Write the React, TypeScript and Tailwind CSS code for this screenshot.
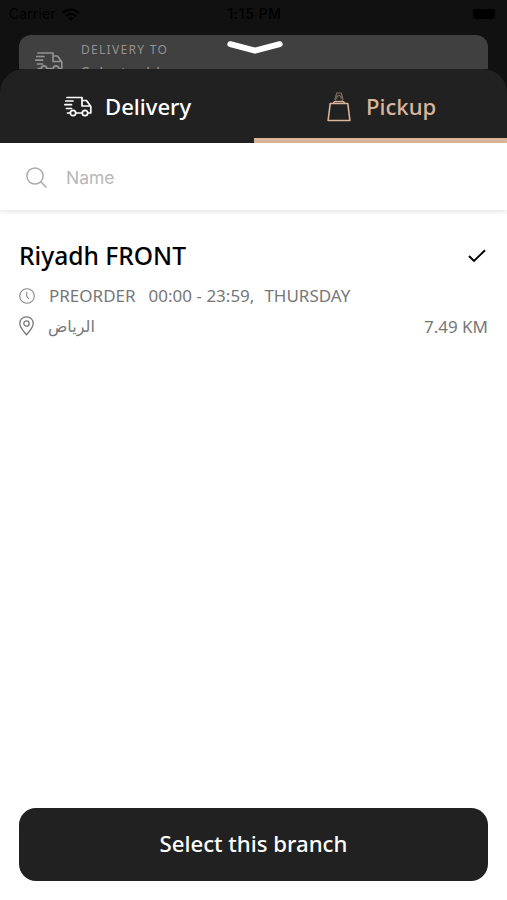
import React from "react";

function Truck({ className }: { className: string }) {
  return (
    <svg className={className} viewBox="0 0 28 20" fill="none" stroke="currentColor" strokeWidth="1.7" strokeLinecap="round" strokeLinejoin="round">
      <path d="M3 1H18V4M18 4H22.5L26.8 10V16.5H24M18 16.5H12M6.5 16.5H3.5M1.8 4.5H9M.9 8.2H7.5M2.5 12H7.5M18 4V9.5H26" />
      <circle cx="9" cy="16.5" r="2.7" />
      <circle cx="21" cy="16.5" r="2.7" />
    </svg>
  );
}

function Bag() {
  return (
    <svg className="h-[30px] w-6 shrink-0" viewBox="0 0 24 30" fill="none" stroke="currentColor">
      <path d="M3.2 11.5H20.8L22.9 28.5H1.1Z" strokeWidth="1.6" strokeLinejoin="round" />
      <path d="M6.3 11L7.5 9.6H16.5L17.7 11" strokeWidth="1.4" />
      <path d="M8 7.2L9.8 1H14.2L16 7.2L14.7 9.3H9.3ZM9.8 7.2C9.2 2.2 14.8 2.2 14.2 7.2" strokeWidth="1.1" opacity=".55" />
    </svg>
  );
}

export default function App() {
  return (
    <div className="flex h-[900px] w-full flex-col overflow-hidden bg-[#111] font-['Noto_Sans','Open_Sans',sans-serif] whitespace-nowrap">
      <header className="grid h-[35px] shrink-0 grid-cols-3 items-start pt-[5px] pr-[12px] pl-[9px] font-['Inter',sans-serif] text-[13.8px] leading-[18px] text-black">
        <div className="flex items-center gap-[6px]">
          <span className="tracking-[0.2px]">Carrier</span>
          <svg className="h-[13px] w-[18px]" viewBox="0 0 18 13" fill="none" stroke="currentColor" strokeWidth="2.3">
            <path d="M1 5C5.5.5 12.5.5 17 5M4 8.2C7 5.4 11 5.4 14 8.2" />
            <path d="M6.2 10C8 8.5 10 8.5 11.8 10L9 13Z" fill="currentColor" stroke="none" />
          </svg>
        </div>
        <span className="pl-[5px] text-center font-medium tracking-[0.7px]">1:15 PM</span>
        <div className="mt-1 h-[10px] w-[22px] justify-self-end rounded-[3px] bg-black" />
      </header>

      <section className="relative mx-[19px] flex h-[34px] shrink-0 gap-[18px] overflow-hidden rounded-t-xl bg-[#404040] pl-4 text-[#929292]">
        <Truck className="mt-[17px] h-5 w-7 shrink-0" />
        <div className="pt-[7px]">
          <p className="text-[12px] leading-[16px] tracking-[1.3px]">DELIVERY TO</p>
          <p className="mt-[4px] text-[16px] leading-[22px] tracking-[0.2px]">Select address</p>
        </div>
        <svg className="absolute top-[5px] left-[208px] h-[15px] w-14" viewBox="0 0 56 15" fill="none" stroke="#fff" strokeWidth="6" strokeLinecap="round" strokeLinejoin="round">
          <path d="M3.3 4.2L28 10.7L52.7 4.2" />
        </svg>
      </section>

      <main className="flex flex-1 flex-col">
        <nav className="flex h-[74px] shrink-0 overflow-hidden rounded-t-[24px] bg-[#212121] text-[22.1px] font-medium">
          <button className="flex w-[254px] items-center pt-px pl-16 text-white">
            <Truck className="h-[21px] w-7 shrink-0" />
            <span className="ml-[13px]">Delivery</span>
          </button>
          <button className="flex flex-1 items-center border-b-[5px] border-[#d8b59b] pt-[6px] pl-[73px] text-[#d8b59b]">
            <Bag />
            <span className="ml-[15px]">Pickup</span>
          </button>
        </nav>

        <div className="flex flex-1 flex-col bg-white">
          <label className="flex h-[67px] shrink-0 items-center pt-px pl-[26px] shadow-[0_2px_5px_rgba(0,0,0,0.1)]">
            <svg className="h-[21px] w-[21px]" viewBox="0 0 21 21" fill="none" stroke="#aaa" strokeWidth="1.5" strokeLinecap="round">
              <circle cx="9" cy="9" r="8.1" />
              <path d="M15 15L20 20" />
            </svg>
            <span className="ml-[19px] pt-[2px] font-['Inter',sans-serif] text-[17.5px] text-[#b8b8b8]">Name</span>
          </label>

          <article className="flex-1 px-[19px] pt-[29px] text-[17px] text-[#777]">
            <div className="flex h-[34px] items-center justify-between text-black">
              <h1 className="text-[24.6px] font-medium">Riyadh FRONT</h1>
              <svg className="mr-[2px] mb-px h-[14px] w-[18px]" viewBox="0 0 18 14" fill="none" stroke="currentColor" strokeWidth="1.9">
                <path d="M1 7L6 12L17 1.2" />
              </svg>
            </div>
            <div className="mt-[8px] flex h-[30px] items-center">
              <svg className="h-4 w-4" viewBox="0 0 16 16" fill="none" stroke="#888" strokeWidth="1.1">
                <circle cx="8" cy="8" r="7.3" />
                <path d="M7.7 3.7V8L10 11" />
              </svg>
              <span className="ml-[14px]">PREORDER</span>
              <span className="ml-[13px]">00:00 - 23:59,</span>
              <span className="ml-[10px]">THURSDAY</span>
            </div>
            <div className="flex h-[30px] items-center">
              <svg className="h-[20px] w-[15px]" viewBox="0 0 15 20" fill="none" stroke="#777" strokeWidth="1.3">
                <path d="M7.5 18.8C5 15.6.8 11.8.8 7.5C.8 3.5 3.7.8 7.5.8S14.2 3.5 14.2 7.5C14.2 11.8 10 15.6 7.5 18.8Z" />
                <circle cx="7.5" cy="7.5" r="2.7" />
              </svg>
              <span dir="rtl" lang="ar" className="ml-[14px] pt-px font-['DejaVu_Sans',sans-serif] text-[16px]">الرياض</span>
              <span className="ml-auto pt-[2px]">7.49 KM</span>
            </div>
          </article>

          <button className="mx-[19px] mb-[19px] h-[73px] shrink-0 rounded-[17px] bg-[#212121] pb-0.5 text-[22.2px] font-medium text-white">
            Select this branch
          </button>
        </div>
      </main>
    </div>
  );
}
